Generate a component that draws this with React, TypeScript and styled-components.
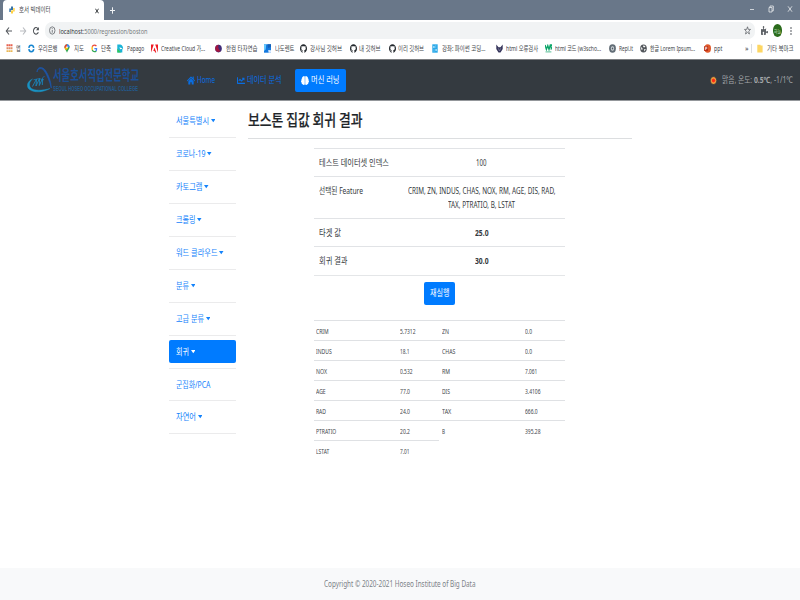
import React, { useLayoutEffect, useRef, useState } from "react";
import styled, { createGlobalStyle, css } from "styled-components";
import { FaHome, FaChartLine, FaBrain, FaGithub, FaPuzzlePiece } from "react-icons/fa";

const Global = createGlobalStyle`
  * { box-sizing: border-box; }
  html, body { margin: 0; padding: 0; }
  body {
    width: 800px; height: 600px; overflow: hidden; background: #fff; color: #34383c;
    font-family: "Noto Sans", "Noto Sans CJK KR", sans-serif;
    font-size: 8.9px; line-height: 14px;
  }
`;

/* Text condensed horizontally to a given width. */
const FitBox = styled.span<{ $w: number }>`
  display: block;
  flex: none;
  width: ${(p) => p.$w}px;
  white-space: nowrap;
`;
const FitInner = styled.span`
  display: inline-block;
  vertical-align: top;
  transform-origin: 0 50%;
`;
function Fit({ w, children }: { w: number; children: React.ReactNode }) {
  const ref = useRef<HTMLSpanElement>(null);
  const [scale, setScale] = useState(1);
  useLayoutEffect(() => {
    const measure = () => {
      if (ref.current && ref.current.offsetWidth) {
        setScale(w / parseFloat(getComputedStyle(ref.current).width));
      }
    };
    measure();
    document.fonts.ready.then(measure);
  }, [w]);
  return (
    <FitBox $w={w}>
      <FitInner ref={ref} style={{ transform: `scaleX(${scale})` }}>{children}</FitInner>
    </FitBox>
  );
}

const Page = styled.div`
  width: 800px;
  height: 600px;
  display: flex;
  flex-direction: column;
  overflow: hidden;
`;

/* Browser frame */
const TabStrip = styled.div`
  height: 20px;
  flex: none;
  display: flex;
  background: #697789;
`;
const Tab = styled.div`
  margin-left: 3px;
  width: 101px;
  height: 20px;
  background: #fff;
  border-radius: 4px 4px 0 0;
  display: flex;
  align-items: center;
  padding-left: 5.5px;
  font-size: 6.6px;
  color: #3c4043;
  svg { margin-right: 4px; flex: none; }
`;
const TabClose = styled.svg`
  && { margin: 1px 0 0 44.5px; }
`;
const NewTab = styled.svg`
  margin: 6.5px 0 0 6px;
`;
const WindowButtons = styled.div`
  margin-left: auto;
  width: 52px;
  height: 17px;
  display: flex;
  align-items: center;
  padding-left: 1px;
`;
const Toolbar = styled.div`
  height: 19px;
  flex: none;
  display: flex;
  align-items: center;
  padding: 2px 0 0 5px;
  background: #fff;
`;
const NavIcons = styled.svg`
  flex: none;
  width: 40px;
  height: 16px;
`;
const AddressBar = styled.div`
  width: 710px;
  height: 16.5px;
  border-radius: 7px;
  background: #f1f3f4;
  display: flex;
  align-items: center;
  padding-left: 4px;
  font-size: 7.8px;
  color: #777b80;
  b { font-weight: 400; color: #303438; }
  svg { flex: none; }
`;
const Info = styled.svg`
  margin-right: 3.3px;
`;
const Star = styled.svg`
  margin-left: 596.5px;
`;
const ToolIcons = styled.div`
  display: flex;
  align-items: center;
  padding-left: 5.5px;
  color: #5f6368;
  svg { display: block; }
`;
const Puzzle = styled(FaPuzzlePiece)`
  width: 7px;
  height: 9px;
`;
const Avatar = styled.div`
  margin: 0 8px 0 5px;
  width: 9.5px;
  height: 12.5px;
  border-radius: 50%;
  background: #2b6b1c;
  color: #dcebd8;
  font-size: 4.8px;
  display: flex;
  align-items: center;
  justify-content: center;
`;
const BookmarkBar = styled.div`
  height: 20px;
  flex: none;
  display: flex;
  align-items: center;
  padding: 0 0 1px 5.5px;
  background: #fff;
  font-size: 6.9px;
  color: #404347;
`;
const Bookmark = styled.div<{ $slot: number; $gap: number }>`
  flex: none;
  width: ${(p) => p.$slot}px;
  display: flex;
  align-items: center;
  gap: ${(p) => p.$gap}px;
  svg { flex: none; display: block; }
`;
const GithubMark = styled(FaGithub)`
  width: 7px;
  height: 9px;
  color: #24292e;
`;
const Overflow = styled.div`
  width: 6.5px;
  flex: none;
  font-size: 7px;
  line-height: 12px;
`;
const Divider = styled.div`
  width: 1px;
  height: 9px;
  margin-right: 5px;
  background: #dadce0;
`;

/* Site header */
const Navbar = styled.header`
  height: 42px;
  flex: none;
  display: flex;
  align-items: center;
  padding-left: 27px;
  background: #343a40;
  border-top: 1px solid #7c7e81;
  border-bottom: 1px solid #94979b;
`;
const Brand = styled.div`
  display: flex;
  align-items: center;
  width: 152.5px;
  height: 28px;
`;
const BrandText = styled.div`
  margin-left: 1px;
  display: flex;
  flex-direction: column;
  font-family: "Liberation Sans", "Noto Sans CJK KR", sans-serif;
  font-weight: 700;
`;
const BrandKo = styled.div`
  height: 16px;
  font-size: 13.5px;
  line-height: 16px;
  color: #1b4f96;
`;
const BrandEn = styled.div`
  height: 9px;
  font-size: 7.6px;
  line-height: 9px;
  color: #235a8f;
`;
const NavLink = styled.div<{ $w: number; $active?: boolean }>`
  width: ${(p) => p.$w}px;
  height: 23px;
  flex: none;
  display: flex;
  align-items: center;
  gap: 2px;
  padding-left: 7px;
  border-radius: 2px;
  color: #0a6de0;
  svg { flex: none; width: 8px; height: 9px; }
  ${(p) => p.$active && css`
    padding-left: 6.5px;
    background: #007bff;
    color: #fff;
  `}
`;
const Weather = styled.div`
  margin-left: auto;
  width: 90px;
  display: flex;
  align-items: center;
  gap: 5px;
  color: #a5a8ab;
`;

/* Content */
const Content = styled.div`
  flex: 1;
  display: flex;
  padding: 4px 0 0 168.5px;
`;
const Sidebar = styled.nav`
  width: 67px;
  flex: none;
`;
const SideItem = styled.div<{ $short?: boolean }>`
  height: ${(p) => (p.$short ? 32 : 33)}px;
  padding-top: 4px;
  border-bottom: 1px solid #ebebec;
`;
const SideLink = styled.div<{ $active?: boolean }>`
  width: 67px;
  height: 23px;
  display: flex;
  align-items: center;
  gap: 2px;
  padding: 1px 0 0 7px;
  border-radius: 2px;
  color: #1483fb;
  ${(p) => p.$active && css`background: #007bff; color: #fff;`}
`;
const Main = styled.main`
  margin-left: 12.5px;
  width: 384px;
`;
const Title = styled.h3`
  margin: 0;
  height: 34px;
  padding-top: 2px;
  border-bottom: 1px solid #dcdee0;
  color: #212529;
  font-size: 16px;
  font-weight: 500;
  line-height: 24px;
  font-family: "Noto Sans CJK KR", sans-serif;
  -webkit-text-stroke: .2px #212529;
`;
const Result = styled.div`
  width: 251.5px;
  margin: 9px 0 0 65.5px;
  border-bottom: 1px solid #e4e6e8;
`;
const ResultRow = styled.div<{ $h: number }>`
  height: ${(p) => p.$h}px;
  padding: 7px 0 0 5.5px;
  border-top: 1px solid #e1e3e6;
  display: flex;
`;
const Label = styled.div`
  width: 78.5px;
  flex: none;
`;
const Value = styled.div<{ $bold?: boolean }>`
  width: 168px;
  display: flex;
  flex-direction: column;
  align-items: center;
  font-weight: ${(p) => (p.$bold ? 700 : 400)};
`;
const Rerun = styled.button`
  display: flex;
  align-items: center;
  justify-content: center;
  width: 31px;
  height: 22.5px;
  margin: 6px 0 15.5px 176px;
  padding: 0;
  border: 0;
  border-radius: 2px;
  background: #007bff;
  color: #fff;
  font: inherit;
`;
const Tables = styled.div`
  display: flex;
  align-items: flex-start;
  width: 251.5px;
  margin-left: 65.5px;
`;
const SmallTable = styled.div`
  width: 125.75px;
  font-size: 7.1px;
  color: #43474b;
`;
const SmallRow = styled.div`
  height: 20px;
  padding: 1px 0 0 2.5px;
  border-top: 1px solid #dfe1e4;
  display: flex;
  align-items: center;
`;
const SmallKey = styled.div`
  width: 83.5px;
`;
const Footer = styled.footer`
  height: 32px;
  flex: none;
  display: flex;
  align-items: center;
  justify-content: center;
  background: #f8f9fa;
  color: #7b8187;
`;

const Caret = () => (
  <svg width="4.5" height="4" viewBox="0 0 4.5 4"><path d="M0 0H4.5L2.25 3.2Z" fill="currentColor" /></svg>
);

const icon = (children: React.ReactNode) => (
  <svg width="7" height="9" viewBox="0 0 7 9">{children}</svg>
);

const icons: Record<string, React.ReactNode> = {
  apps: icon(<>
    <path d="M.5 1.3H6.5" stroke="#e8604f" strokeWidth="1.9" strokeDasharray="1.8 .3" />
    <path d="M.5 4.2H6.5" stroke="#df8e68" strokeWidth="1.9" strokeDasharray="1.8 .3" />
    <path d="M.5 7.1H6.5" stroke="#eab755" strokeWidth="1.9" strokeDasharray="1.8 .3" />
  </>),
  woori: icon(<>
    <ellipse cx="3.3" cy="4.5" rx="2.4" ry="3.2" fill="none" stroke="#1685cf" strokeWidth="1.5" />
    <path d="M0 4.5H6.8" stroke="#fff" strokeWidth="1.2" />
  </>),
  map: icon(<>
    <path d="M3 .3C1.3.3.5 1.7.5 3.2.5 5 2.4 6.2 3 8.8 3.6 6.2 5.6 5 5.6 3.2 5.6 1.7 4.7.3 3 .3Z" fill="#34a853" />
    <path d="M.5 3.2C.5 1.7 1.3.3 3 .3L3.3 3 1.2 5.2Z" fill="#ea4335" />
    <path d="M3 .3C4.7.3 5.6 1.7 5.6 3.2L3 3Z" fill="#4285f4" />
    <path d="M.7 4.3 2.8 2.4 4 4.4 1.9 6.2Z" fill="#fbbc04" />
    <ellipse cx="3" cy="3.2" rx=".8" ry="1" fill="#fff" />
  </>),
  google: icon(<>
    <path d="M5.4 2.2C4.8 1.4 4 1.2 3.4 1.2 2.4 1.2 1.6 1.8 1.3 2.8" fill="none" stroke="#ea4335" strokeWidth="1.3" />
    <path d="M1.3 2.8Q.8 4.4 1.3 6" fill="none" stroke="#fbbc05" strokeWidth="1.3" />
    <path d="M1.3 6C1.7 7.2 2.5 7.7 3.4 7.7 4.1 7.7 4.8 7.4 5.2 6.8" fill="none" stroke="#34a853" strokeWidth="1.3" />
    <path d="M5 7Q5.6 6 5.6 4.7H3.4" fill="none" stroke="#4285f4" strokeWidth="1.2" />
  </>),
  papago: icon(<>
    <path d="M.3.4H3.3Q6.1 1 6.1 4.8L5.3 5.5V8.5H.3Z" fill="#1bb4d8" />
    <path d="M.3 4.5 4 8.5H.3Z" fill="#31c85b" />
    <path d="M2.4 3.3 5.9 4.6 3.2 5.3Z" fill="#fff" />
  </>),
  adobe: icon(
    <path d="M0 .4H2.8L0 8.6ZM4.2.4H7V8.6ZM3.5 3.4 5.3 8.6H4.1L3.5 7H2.3Z" fill="#ee1c24" />
  ),
  hancom: icon(<>
    <ellipse cx="3.5" cy="4.6" rx="3.3" ry="3.8" fill="#3f2b78" />
    <path d="M.2 4.5C.2 2 2 .8 3.6.8 2.8 3.2 3.2 5 5.5 7.2 2 9 .2 7 .2 4.5Z" fill="#a3153f" />
  </>),
  naver: icon(<>
    <path d="M0 .3H7V8.7H0Z" fill="#1478de" />
    <path d="M0 .3H2.3L1.7 5.5 0 7Z" fill="#64c9ff" />
    <path d="M4.2 6 7 6.3V8.7H4.6Z" fill="#dcecff" />
    <path d="M3.5.3H7V3L4 4Z" fill="#1560b8" />
  </>),
  github: <GithubMark preserveAspectRatio="none" />,
  python: icon(<>
    <path d="M.3.3H5.7V8.7H.3Z" fill="#2aa8e8" />
    <path d="M1.3 2H2.5V4H1.3ZM3.5 5H4.7V7H3.5Z" fill="#c0eafd" />
    <path d="M3.7 1V4M2 5V8" stroke="#6cc7f2" strokeWidth=".7" />
  </>),
  validator: icon(<>
    <path d="M.3.5 2.5 3.2H4.5L6.7.5V5L4.5 8.5H2.5L.3 5Z" fill="#35345a" />
    <path d="M2.2 4.2 3.5 7 4.8 4.2" fill="none" stroke="#9294b4" strokeWidth=".6" />
  </>),
  w3: icon(<>
    <path d="M.1 1 1.4 5.5 2.8 1.6 4 5.5 5.3 1H6.7L5.6 2.8Q7.3 3.6 5.7 5.5" fill="none" stroke="#0aa568" strokeWidth="1.3" />
    <path d="M.5 7.9H6.4" stroke="#58bd95" strokeWidth="1" />
  </>),
  replit: icon(<>
    <ellipse cx="3.5" cy="4.5" rx="3.4" ry="4.2" fill="#626d76" />
    <ellipse cx="3.5" cy="4.5" rx="1.6" ry="2.2" fill="#d5dade" />
    <ellipse cx="3.5" cy="4.5" rx=".8" ry="1.1" fill="#4d5962" />
  </>),
  globe: icon(<>
    <ellipse cx="3.5" cy="4.5" rx="3.3" ry="4.1" fill="#53575c" />
    <path d="M1 3 2.5 4.3 2.3 6 1.3 5.5ZM3 1.4 5.5 2 4.4 3.6 3.3 3ZM4.2 5 5.9 5.3 4.2 7.6Z" fill="#fff" />
  </>),
  ppt: icon(<>
    <ellipse cx="3.7" cy="4.5" rx="3.3" ry="4.2" fill="#e0592b" />
    <path d="M0 2.3H4V6.9H0Z" fill="#b92d14" />
    <path d="M1.3 6V3.2H2.8V4.7H1.3" fill="none" stroke="#fff" strokeWidth=".7" />
  </>),
  folder: icon(<path d="M.3.8H3.6V1.6H5.6V8.5H.3Z" fill="#fdd663" />),
};

/* name, label, label width, gap after the icon, distance to the next icon */
const bookmarks: [string, string, number, number, number][] = [
  ["apps", "앱", 4.5, 3.7, 22.3],
  ["woori", "우리은행", 19.5, 3, 36.7],
  ["map", "지도", 10, 2.6, 26.5],
  ["google", "단축", 10, 3, 26.5],
  ["papago", "Papago", 17.3, 2.7, 33.7],
  ["adobe", "Creative Cloud 가...", 44, 2.8, 64.3],
  ["hancom", "한컴 타자연습", 31.5, 3.3, 48.7],
  ["naver", "나도렌트", 19.5, 3.4, 36.3],
  ["github", "강사님 깃허브", 32, 2.8, 49.2],
  ["github", "내 깃허브", 21.5, 2.8, 39],
  ["github", "이리 깃허브", 26, 2.8, 43.7],
  ["python", "강좌: 파이썬 코딩...", 43.5, 2.7, 63.8],
  ["validator", "html 오류검사", 32, 3, 49],
  ["w3", "html 코드 (w3scho...", 46, 3, 64],
  ["replit", "Repl.it", 14, 3, 31],
  ["globe", "한글 Lorem Ipsum...", 45, 3, 64],
  ["ppt", "ppt", 8.3, 3.1, 40.8],
];

const menu: [string, number, boolean][] = [
  ["서울특별시", 33, true],
  ["코로나-19", 29.5, true],
  ["카토그램", 26.5, true],
  ["크롤링", 19.5, true],
  ["워드 클라우드", 41.5, true],
  ["분류", 13, true],
  ["고급 분류", 28, true],
  ["회귀", 13, true],
  ["군집화/PCA", 34.5, false],
  ["자연어", 20, true],
];

type Cell = [string, number, string, number];
const left: Cell[] = [
  ["CRIM", 12.7, "5.7312", 15.5],
  ["INDUS", 15.7, "18.1", 9.5],
  ["NOX", 11, "0.532", 12.5],
  ["AGE", 9.7, "77.0", 10],
  ["RAD", 10, "24.0", 10],
  ["PTRATIO", 20.3, "20.2", 10],
  ["LSTAT", 13.3, "7.01", 9.5],
];
const right: Cell[] = [
  ["ZN", 7, "0.0", 7],
  ["CHAS", 13.3, "0.0", 7],
  ["RM", 8, "7.061", 12.3],
  ["DIS", 8, "3.4106", 15.5],
  ["TAX", 9.3, "666.0", 12.7],
  ["B", 3, "395.28", 15.5],
];

const DataTable = ({ rows }: { rows: Cell[] }) => (
  <SmallTable>
    {rows.map(([k, kw, v, vw]) => (
      <SmallRow key={k}>
        <SmallKey><Fit w={kw}>{k}</Fit></SmallKey>
        <Fit w={vw}>{v}</Fit>
      </SmallRow>
    ))}
  </SmallTable>
);

const Emblem = () => (
  <svg width="25" height="28" viewBox="0 0 25 28" fill="none">
    <path d="M10 6C10 .5 15.5 0 18.5 4.5 21.5 9 24.3 16 24.3 22 22.5 15 20 8.5 17 4.5 14.5 1.5 11 2 10 6Z" fill="#1d55a8" stroke="#1d55a8" strokeWidth=".7" />
    <path d="M5.5 13C0 15.5-1.2 20.5 2.5 23.5 7 27 16 26.5 23 22.5 15.5 24.5 8 25 4.5 22.5 1.5 20 2 16 5.5 13Z" fill="#1993c4" stroke="#1993c4" strokeWidth=".4" />
    <path d="M5.5 20.5 9.5 13 9 20 12.5 12.5 12.3 19.5 15.5 12.5 15.3 19" stroke="#1a86bb" strokeWidth=".9" />
    <path d="M6.5 13.8Q12 11.5 17 13.8" stroke="#1a7ab5" strokeWidth=".8" />
    <path d="M15.5 11.5 17.5 10.5" stroke="#1b64a5" strokeWidth="1" />
  </svg>
);

export default function App() {
  return (
    <Page>
      <Global />
      <TabStrip>
        <Tab>
          <svg width="6" height="8" viewBox="0 0 6 8">
            <path d="M2 .4H4V4H1.8V6H.3V2.4H2Z" fill="#3774a8" />
            <path d="M4 7.6H2V4.5H4.2V2H5.7V5.6H4Z" fill="#ffd242" />
          </svg>
          <Fit w={31.5}>호서 빅데이터</Fit>
          <TabClose width="4" height="6" viewBox="0 0 4 6"><path d="M.4.7 3.6 5.3M3.6.7.4 5.3" stroke="#3c4043" /></TabClose>
        </Tab>
        <NewTab width="5" height="7" viewBox="0 0 5 7"><path d="M2.5.3V6.7M0 3.5H5" stroke="#f1f3f5" strokeWidth="1" /></NewTab>
        <WindowButtons>
          <svg width="48" height="8" viewBox="0 0 48 8" fill="none" stroke="#e8ebee" strokeWidth=".8">
            <path d="M1 4.5H5" />
            <path d="M20 2.5H23V7H20ZM21 2.5V1H24.3V5.8H23" />
            <path d="M39 1.3 43 6.7M43 1.3 39 6.7" />
          </svg>
        </WindowButtons>
      </TabStrip>
      <Toolbar>
        <NavIcons viewBox="0 0 40 16" fill="none">
          <path d="M7 8H1.5M4 4.5 1.3 8 4 11.5" stroke="#55595e" strokeWidth="1.1" />
          <path d="M15 8H20.5M18 4.5 20.7 8 18 11.5" stroke="#b9bcc0" strokeWidth="1.1" />
          <path d="M33 5.8A2.5 3.3 0 1 0 33.3 9.3" stroke="#4a4e53" strokeWidth="1.1" />
          <path d="M33.9 4V7.3H31Z" fill="#4a4e53" />
        </NavIcons>
        <AddressBar>
          <Info width="6.5" height="9" viewBox="0 0 6.5 9" fill="none" stroke="#5f6368" strokeWidth=".8">
            <ellipse cx="3.25" cy="4.5" rx="2.7" ry="3.7" /><path d="M3.25 4V6.7M3.25 2.2V3.2" />
          </Info>
          <Fit w={88.5}><b>localhost</b>:5000/regression/boston</Fit>
          <Star width="7" height="9" viewBox="0 0 7 9" fill="none" stroke="#5f6368" strokeWidth=".8">
            <path d="M3.5.8 4.3 3.4H6.5L4.8 5.2 5.4 8 3.5 6.4 1.6 8 2.2 5.2.5 3.4H2.7Z" />
          </Star>
        </AddressBar>
        <ToolIcons>
          <Puzzle preserveAspectRatio="none" />
          <Avatar><Fit w={7}>하늘</Fit></Avatar>
          <svg width="2" height="8" viewBox="0 0 2 8" fill="#5f6368"><path d="M.3.3H1.7V1.7H.3ZM.3 3.3H1.7V4.7H.3ZM.3 6.3H1.7V7.7H.3Z" /></svg>
        </ToolIcons>
      </Toolbar>
      <BookmarkBar>
        {bookmarks.map(([name, label, w, gap, slot], i) => (
          <Bookmark key={i} $slot={slot} $gap={gap}>
            {icons[name]}
            <Fit w={w}>{label}</Fit>
          </Bookmark>
        ))}
        <Overflow><Fit w={3.5}>»</Fit></Overflow>
        <Divider />
        <Bookmark $slot={40} $gap={2.7}>{icons.folder}<Fit w={26.5}>기타 북마크</Fit></Bookmark>
      </BookmarkBar>

      <Navbar>
        <Brand>
          <Emblem />
          <BrandText>
            <BrandKo><Fit w={86}>서울호서직업전문학교</Fit></BrandKo>
            <BrandEn><Fit w={85}>SEOUL HOSEO OCCUPATIONAL COLLEGE</Fit></BrandEn>
          </BrandText>
        </Brand>
        <NavLink $w={50}><FaHome preserveAspectRatio="none" /><Fit w={18}>Home</Fit></NavLink>
        <NavLink $w={65}><FaChartLine preserveAspectRatio="none" /><Fit w={34.5}>데이터 분석</Fit></NavLink>
        <NavLink $w={51.5} $active><FaBrain preserveAspectRatio="none" /><Fit w={28.5}>머신 러닝</Fit></NavLink>
        <Weather>
          <svg width="7" height="9" viewBox="0 0 7 9">
            <ellipse cx="3.5" cy="4.5" rx="2.7" ry="3.6" fill="#f0a743" stroke="#a66c35" strokeWidth=".8" strokeDasharray="1 .7" />
            <ellipse cx="3.5" cy="4.5" rx="1.6" ry="1.9" fill="#ff2a14" />
          </svg>
          <Fit w={71}>맑음, 온도: <b>0.5℃</b>, -1/1℃</Fit>
        </Weather>
      </Navbar>

      <Content>
        <Sidebar>
          {menu.map(([label, w, caret]) => (
            <SideItem key={label} $short={!caret}>
              <SideLink $active={label === "회귀"}>
                <Fit w={w}>{label}</Fit>
                {caret && <Caret />}
              </SideLink>
            </SideItem>
          ))}
        </Sidebar>
        <Main>
          <Title><Fit w={114.5}>보스톤 집값 회귀 결과</Fit></Title>
          <Result>
            <ResultRow $h={28}>
              <Label><Fit w={70}>테스트 데이터셋 인덱스</Fit></Label>
              <Value><Fit w={10.5}>100</Fit></Value>
            </ResultRow>
            <ResultRow $h={42}>
              <Label><Fit w={44}>선택된 Feature</Fit></Label>
              <Value>
                <Fit w={147.5}>CRIM, ZN, INDUS, CHAS, NOX, RM, AGE, DIS, RAD,</Fit>
                <Fit w={67}>TAX, PTRATIO, B, LSTAT</Fit>
              </Value>
            </ResultRow>
            <ResultRow $h={28}>
              <Label><Fit w={22}>타겟 값</Fit></Label>
              <Value $bold><Fit w={13.5}>25.0</Fit></Value>
            </ResultRow>
            <ResultRow $h={29}>
              <Label><Fit w={28.5}>회귀 결과</Fit></Label>
              <Value $bold><Fit w={13.5}>30.0</Fit></Value>
            </ResultRow>
          </Result>
          <Rerun><Fit w={19.5}>재실행</Fit></Rerun>
          <Tables>
            <DataTable rows={left} />
            <DataTable rows={right} />
          </Tables>
        </Main>
      </Content>

      <Footer><Fit w={151.5}>Copyright © 2020-2021 Hoseo Institute of Big Data</Fit></Footer>
    </Page>
  );
}
